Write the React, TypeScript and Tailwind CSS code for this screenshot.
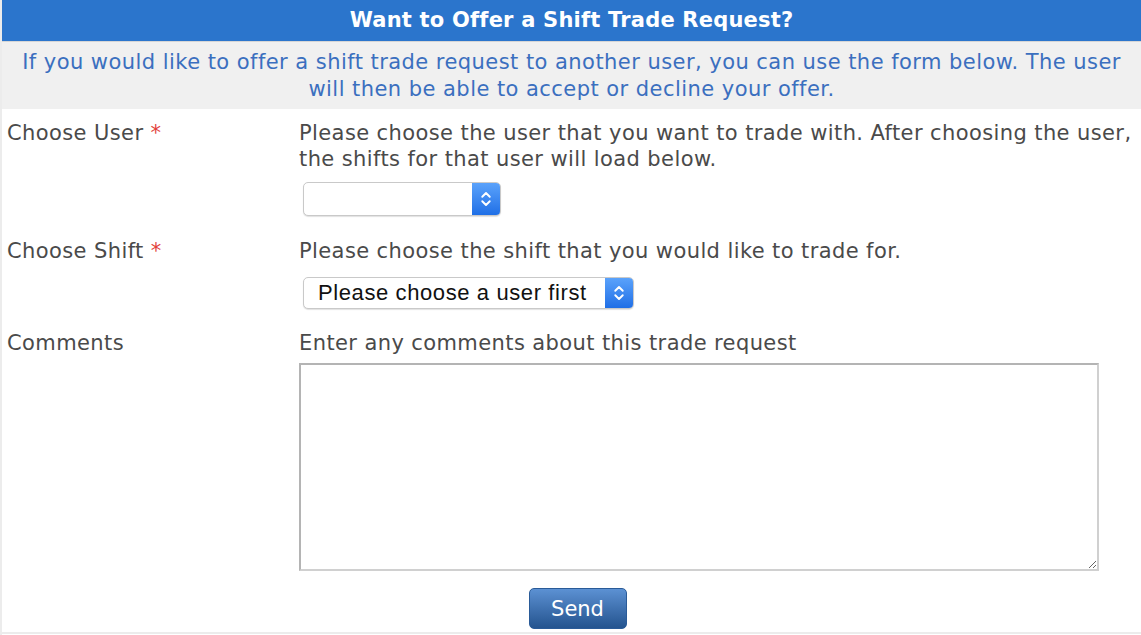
import { ChevronsUpDown } from 'lucide-react';

const font = { fontFamily: '"DejaVu Sans", Verdana, sans-serif' };

function SelectBox({ width, label }: { width: string; label?: string }) {
  return (
    <div
      className={`flex ${width} h-full rounded-[5px] border border-[#c9c9c9] bg-white shadow-[0_1px_1px_rgba(0,0,0,0.12)] overflow-hidden`}
    >
      <div
        className="flex-1 flex items-center pl-[14px] text-[22px] tracking-[0.6px] text-[#111]"
        style={{ fontFamily: '"Liberation Sans", Arial, sans-serif' }}
      >
        {label}
      </div>
      <div className="w-[28px] flex items-center justify-center bg-gradient-to-b from-[#5aa2fb] to-[#1f6fe6]">
        <ChevronsUpDown className="w-[18px] h-[22px] text-white" strokeWidth={2.5} />
      </div>
    </div>
  );
}

export default function App() {
  return (
    <div className="min-h-screen bg-white border-l-2 border-[#ececec]" style={font}>
      {/* Header */}
      <div className="h-[41px] bg-[#2b75cc] flex items-center justify-center">
        <h1 className="text-[21px] font-bold text-white tracking-[0.2px]">Want to Offer a Shift Trade Request?</h1>
      </div>

      {/* Intro band */}
      <div className="border-t border-[#d6d6d6] bg-[#f0f0f0] h-[68px] flex items-center justify-center">
        <p className="text-center text-[21px] tracking-[0.45px] leading-[27px] text-[#3b6fbf] whitespace-nowrap">
          If you would like to offer a shift trade request to another user, you can use the form below. The user
          <br />
          will then be able to accept or decline your offer.
        </p>
      </div>

      <div className="text-[21px] tracking-[0.4px] leading-[26px] text-[#4a4a4a] pt-[11px]">
        {/* Choose user */}
        <div className="flex">
          <div className="w-[297px] pl-[5px]">
            Choose User <span className="text-[#e2413a]">*</span>
          </div>
          <div className="flex-1 whitespace-nowrap">
            <p>
              Please choose the user that you want to trade with. After choosing the user,
              <br />
              the shifts for that user will load below.
            </p>
            <div className="h-[34px] mt-[10px] ml-[4px]">
              <SelectBox width="w-[198px]" />
            </div>
          </div>
        </div>

        {/* Choose shift */}
        <div className="flex mt-[22px]">
          <div className="w-[297px] pl-[5px]">
            Choose Shift <span className="text-[#e2413a]">*</span>
          </div>
          <div className="flex-1 whitespace-nowrap">
            <p>Please choose the shift that you would like to trade for.</p>
            <div className="h-[32px] mt-[13px] ml-[4px]">
              <SelectBox width="w-[331px]" label="Please choose a user first" />
            </div>
          </div>
        </div>

        {/* Comments */}
        <div className="flex mt-[21px]">
          <div className="w-[297px] pl-[5px]">Comments</div>
          <div className="flex-1">
            <p>Enter any comments about this trade request</p>
            <textarea className="block mt-[7px] w-[800px] h-[208px] border-2 border-[#b4b4b4] border-b-[#d0d0d0] border-r-[#d0d0d0] bg-white outline-none" />
          </div>
        </div>

        {/* Send */}
        <div className="flex justify-center pl-[12px] mt-[17px]">
          <button className="w-[98px] h-[41px] rounded-[5px] bg-gradient-to-b from-[#5c91d3] to-[#24548f] text-white text-[21px] tracking-normal border border-[#2a5b98]">
            Send
          </button>
        </div>
        <div className="mt-[3px] border-t-2 border-[#ececec]" />
      </div>
    </div>
  );
}
